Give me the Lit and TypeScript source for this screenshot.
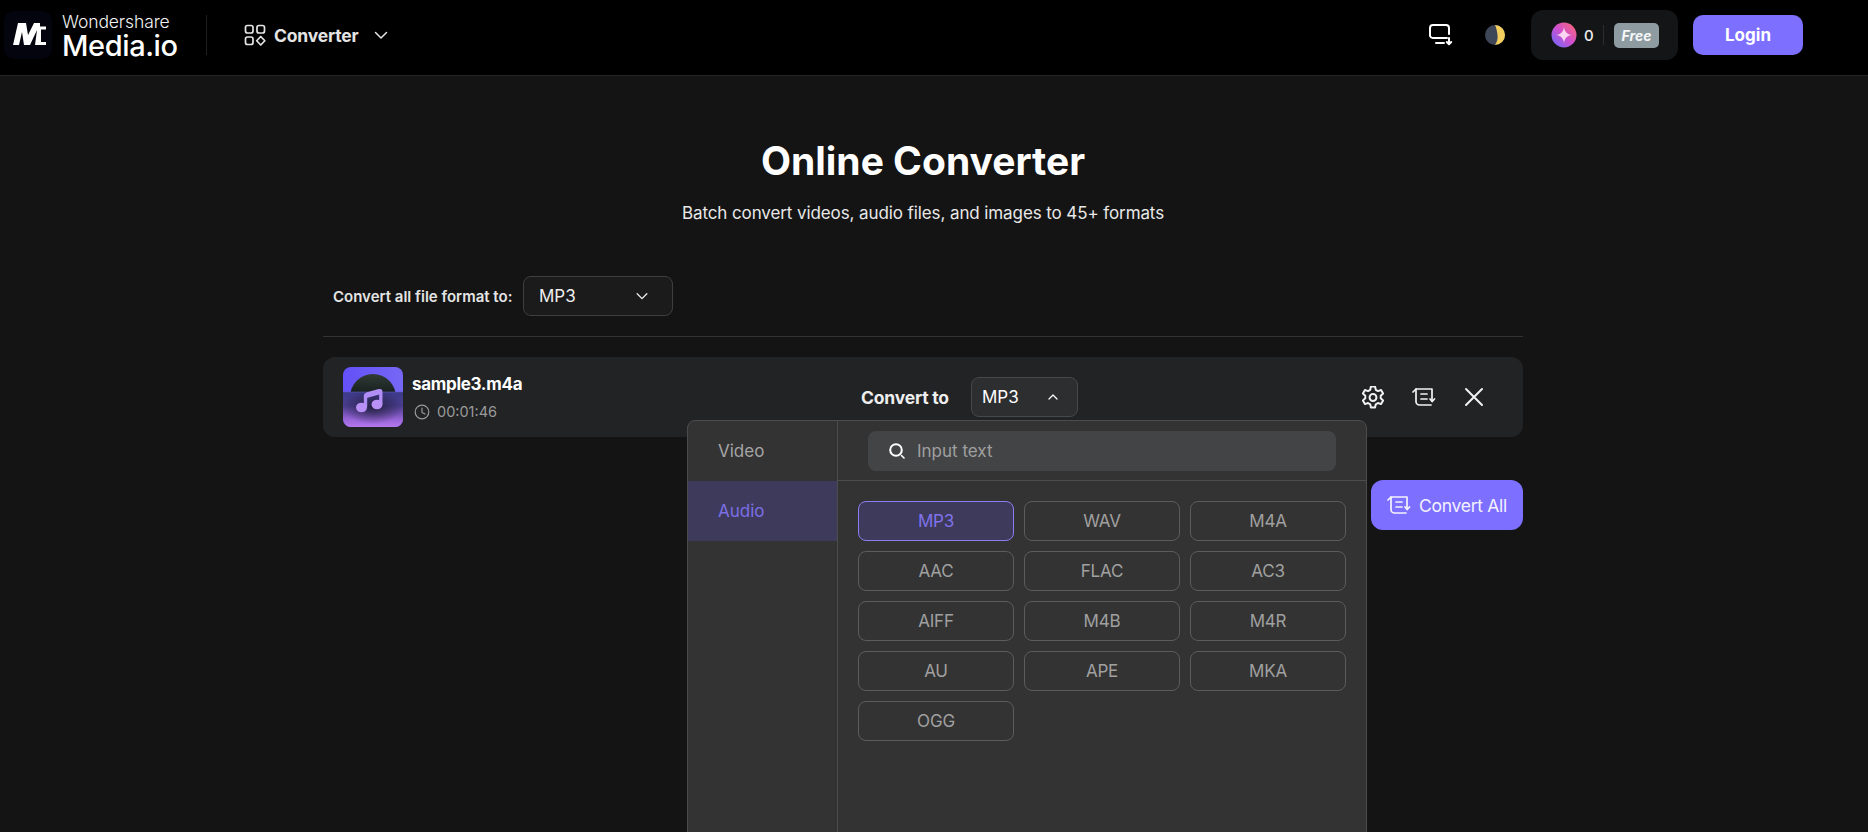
import { LitElement, html, css } from "lit";
import { customElement } from "lit/decorators.js";

const FORMATS = ["MP3","WAV","M4A","AAC","FLAC","AC3","AIFF","M4B","M4R","AU","APE","MKA","OGG"];

const chevronDown = (s = 16) => html`<svg width=${s} height=${s} viewBox="0 0 16 16" fill="none" stroke="currentColor" stroke-width="1.5" stroke-linecap="round" stroke-linejoin="round"><path d="M2.5 5.5 8 11l5.5-5.5"/></svg>`;
const chevronUp = html`<svg width="12" height="12" viewBox="0 0 12 12" fill="none" stroke="currentColor" stroke-width="1.2" stroke-linecap="round" stroke-linejoin="round"><path d="M2 8l4-4 4 4"/></svg>`;
const convertIcon = (s = 24) => html`<svg width=${s} height=${s} viewBox="0 0 24 24" fill="none" stroke="currentColor" stroke-width="1.7" stroke-linecap="round" stroke-linejoin="round"><path d="M1 7l3-3v12.500a3.500 3.500 0 0 0 3.500 3.500H19"/><path d="M4 4h16v12"/><path d="M9 9h6M9 14h6"/><path d="M18 14l2.200 2.500 2.300-2.500"/></svg>`;

@customElement("app-root")
export class AppRoot extends LitElement {
  static styles = css`
    :host { display: block; height: 832px; overflow: hidden; background: #141414; color: #fff; font-family: Inter, "Noto Sans", sans-serif; }
    * { box-sizing: border-box; }
    header { height: 76px; background: #000; border-bottom: 1px solid #262626; display: flex; align-items: center; padding: 0 65px 5px 4px; }
    .mark { width: 48px; height: 48px; border-radius: 10px; background: #04040f; display: flex; align-items: center; justify-content: center; }
    .mark svg { display: block; }
    .brand { margin-left: 10px; display: flex; flex-direction: column; line-height: 1; width: 121px; }
    .brand .top { font-size: 17.5px; font-weight: 300; line-height: 21px; color: #f2f2f2; letter-spacing: -0.1px; }
    .brand .bottom { font-size: 29px; font-weight: 500; line-height: 28px; letter-spacing: -0.4px; }
    .vr { width: 1px; height: 40px; background: #1f1f1f; margin-left: 23px; }
    .tool { margin-left: 37px; display: flex; align-items: center; color: #e4e4e4; }
    .tool .name { margin-left: 8px; font-size: 17.5px; font-weight: 700; width: 99px; letter-spacing: -0.2px; }
    .spacer { flex: 1; }
    .dl { display: flex; margin-right: 32px; margin-left: 1px; }
    .moon { display: flex; margin-right: 26px; }
    .pill { width: 147px; height: 50px; border-radius: 12px; background: #141516; display: flex; align-items: center; padding-left: 20px; margin-right: 15px; }
    .pill .num { margin-left: 7px; font-size: 15px; font-weight: 500; color: #eee; width: 19px; }
    .pill .sep { width: 1px; height: 20px; background: #2c2c2c; }
    .free { margin-left: 10px; width: 45px; height: 25px; border-radius: 5px; background: #8e9ba1; font-size: 14px; font-style: italic; font-weight: 700; display: flex; align-items: center; justify-content: center; color: #f4f6f7; }
    .login { width: 110px; height: 40px; border-radius: 10px; background: #7d6fff; border: 0; color: #fff; font: 700 17px Inter, sans-serif; }

    .wrap { padding-right: 22px; display: flex; justify-content: center; }
    main { width: 1200px; position: relative; }
    h1 { margin: 60px 0 0; height: 50px; line-height: 50px; font-size: 39px; font-weight: 700; text-align: center; }
    .sub { margin-top: 14px; height: 26px; line-height: 26px; font-size: 17px; text-align: center; color: #e8e8e8; letter-spacing: -0.1px; }
    .all { margin-top: 50px; height: 40px; display: flex; align-items: center; padding-left: 10px; }
    .all .lbl { font-size: 15px; font-weight: 600; color: #e4e4e4; width: 190px; }
    .sel { display: flex; align-items: center; border: 1px solid #3f3f3f; border-radius: 8px; color: #eee; font-size: 17px; }
    .sel.big { width: 150px; height: 40px; padding: 0 23px 0 15px; justify-content: space-between; background: #1b1b1b; }
    hr { margin: 20px 0 0; border: 0; height: 1px; background: #333; }
    .row { margin-top: 20px; height: 80px; border-radius: 12px; background: #222325; display: flex; align-items: center; padding: 0 20px; position: relative; }
    .thumb { width: 60px; height: 60px; flex: none; }
    .info { margin-left: 9px; width: 449px; display: flex; flex-direction: column; gap: 9px; }
    .fname { font-size: 17px; font-weight: 700; line-height: 20px; letter-spacing: -0.3px; }
    .dur { display: flex; align-items: center; gap: 7px; margin-left: 2px; font-size: 14.5px; line-height: 18px; color: #9a9a9a; }
    .to { font-size: 17.5px; font-weight: 700; color: #eee; width: 110px; letter-spacing: -0.2px; }
    .sel.small { width: 107px; height: 40px; padding: 0 18px 0 10px; justify-content: space-between; background: #2d2e30; border-color: #47484a; color: #fff; }
    .acts { margin-left: auto; display: flex; align-items: center; gap: 28px; margin-right: 19px; color: #f2f2f2; }
    .acts svg { display: block; }

    .bottom-act { margin-top: 43px; display: flex; justify-content: flex-end; }
    .go { width: 152px; height: 50px; border-radius: 12px; background: #7d6fff; border: 0; color: #f4f2ff; display: flex; align-items: center; justify-content: center; gap: 8px; font: 400 17.5px Inter, sans-serif; letter-spacing: -0.3px; }

    .panel { position: absolute; left: 364px; top: 344px; width: 680px; height: 460px; background: #333; border: 1px solid #4c4c4c; border-radius: 8px 8px 0 0; display: grid; grid-template-columns: 150px 1fr; align-content: start; }
    .side { border-right: 1px solid #4c4c4c; height: 460px; }
    .tab { height: 60px; display: flex; align-items: center; padding-left: 30px; font-size: 17px; color: #a5a5a5; }
    .tab.on { background: #3e3a5c; color: #7c6fe6; }
    .search-box { height: 60px; padding: 10px 30px 0; border-bottom: 1px solid #4c4c4c; }
    .search { height: 40px; border-radius: 8px; background: #434446; display: flex; align-items: center; padding-left: 20px; gap: 11px; color: #a0a0a0; font-size: 17px; }
    .chips { padding: 20px; display: grid; grid-template-columns: repeat(3, 1fr); gap: 10px; }
    .chip { height: 40px; border: 1px solid #5c5c5c; border-radius: 8px; display: flex; align-items: center; justify-content: center; font-size: 17px; color: #a0a0a0; letter-spacing: -0.2px; }
    .chip.on { background: #3e3a5c; border-color: #8a7ef0; color: #7f72ea; }
  `;

  render() {
    return html`
      <header>
        <div class="mark">
          <svg width="48" height="48" viewBox="0 -1 48 48" fill="#fff">
            <path d="M9 33 14 11h8l2 12 6-12h6v3.500h6v3h-5V30h5v3H31l2-15-7 15h-6l-2-13-3 13z"/>
          </svg>
        </div>
        <div class="brand"><span class="top">Wondershare</span><span class="bottom">Media.io</span></div>
        <div class="vr"></div>
        <div class="tool">
          <svg width="22" height="22" viewBox="0 0 22 22" fill="none" stroke="currentColor" stroke-width="1.700">
            <rect x="1.500" y="1.500" width="7.500" height="7.500" rx="2"/>
            <rect x="13" y="1.500" width="7.500" height="7.500" rx="2"/>
            <rect x="1.500" y="13" width="7.500" height="7.500" rx="2"/>
            <path d="M16.750 12.500 20.800 16.750 16.750 21 12.700 16.750z" stroke-linejoin="round"/>
          </svg>
          <span class="name">Converter</span>
          ${chevronDown(16)}
        </div>
        <div class="spacer"></div>
        <div class="dl">
          <svg width="24" height="22" viewBox="0 0 24 22" fill="none" stroke="#fff" stroke-width="2" stroke-linecap="round" stroke-linejoin="round">
            <path d="M18 14H4a3 3 0 0 1-3-2V4a3 3 0 0 1 3-3h13a3 3 0 0 1 3 3v6"/>
            <path d="M7 19h8"/><path d="M20 14v6M17.800 18l2.200 2.200 2.200-2.200"/>
          </svg>
        </div>
        <div class="moon">
          <svg width="20" height="20" viewBox="0 0 20 20">
            <circle cx="10" cy="10" r="10" fill="#3d4757"/>
            <path d="M10 0a10 10 0 0 1 0 20c2-3 3-6 2.500-10S11.500 3 10 0z" fill="#f4cf5e"/>
          </svg>
        </div>
        <div class="pill">
          <svg width="26" height="26" viewBox="0 0 26 26">
            <defs>
              <linearGradient id="cg2" x1="0" y1="1" x2="1" y2="0"><stop offset="0" stop-color="#5f6cff"/><stop offset=".5" stop-color="#d04fd0"/><stop offset="1" stop-color="#ff6a6a"/></linearGradient>
            </defs>
            <circle cx="13" cy="13" r="12.500" fill="url(#cg2)"/>
            <path d="M13 5c.7 5 3 7.300 8 8-5 .7-7.300 3-8 8-.7-5-3-7.300-8-8 5-.7 7.300-3 8-8z" fill="#fbd5f0"/>
          </svg>
          <span class="num">0</span>
          <span class="sep"></span>
          <span class="free">Free</span>
        </div>
        <button class="login">Login</button>
      </header>
      <div class="wrap">
        <main>
          <h1>Online Converter</h1>
          <div class="sub">Batch convert videos, audio files, and images to 45+ formats</div>
          <div class="all">
            <span class="lbl">Convert all file format to:</span>
            <div class="sel big"><span>MP3</span>${chevronDown(14)}</div>
          </div>
          <hr />
          <div class="row">
            <svg class="thumb" viewBox="0 0 60 60">
              <defs>
                <linearGradient id="bg" x1="0" y1="0" x2="1" y2="0"><stop offset="0" stop-color="#6450f8"/><stop offset="1" stop-color="#7767f5"/></linearGradient>
                <linearGradient id="pk" x1="0" y1="0" x2="0" y2="1"><stop offset="0" stop-color="#3d3a8a"/><stop offset=".4" stop-color="#4b3d8f"/><stop offset=".8" stop-color="#9a66da"/><stop offset="1" stop-color="#b578ee"/></linearGradient>
                <radialGradient id="glow" cx=".5" cy=".42" r=".5"><stop offset="0" stop-color="#1d1b33" stop-opacity=".85"/><stop offset="1" stop-color="#1d1b33" stop-opacity="0"/></radialGradient>
                <linearGradient id="vn" x1="0" y1="0" x2="0" y2="1"><stop offset="0" stop-color="#2f3b34"/><stop offset=".5" stop-color="#141a1c"/></linearGradient>
                <clipPath id="rr"><rect width="60" height="60" rx="8"/></clipPath>
              </defs>
              <g clip-path="url(#rr)">
                <rect width="60" height="60" fill="url(#bg)"/>
                <circle cx="30" cy="30" r="23" fill="url(#vn)"/>
                <path d="M0 25h60v35H0z" fill="url(#pk)"/>
                <path d="M0 25h60v35H0z" fill="url(#glow)"/>
                <path d="M0 25h60" stroke="#5f5ab0" stroke-width=".6"/>
                <g fill="none" stroke="#b18df6" stroke-width="3.400" stroke-linejoin="round"><path d="M22.500 40V29.500q0-2 2-2.600l11.500-3.200q1.800-.5 1.800 1.200V37"/></g>
                <path d="M22 27.500 38 23v4l-16 4.500z" fill="#b18df6"/>
                <ellipse cx="18.500" cy="40.500" rx="5.500" ry="4.800" fill="#b990f5"/>
                <ellipse cx="34" cy="37.500" rx="5.500" ry="4.800" fill="#b990f5"/>
              </g>
            </svg>
            <div class="info">
              <div class="fname">sample3.m4a</div>
              <div class="dur">
                <svg width="16" height="16" viewBox="0 0 16 16" fill="none" stroke="#9a9a9a" stroke-width="1.200" stroke-linecap="round" stroke-linejoin="round"><circle cx="8" cy="8" r="6.800"/><path d="M8 4v4.500l3 1.500"/></svg>
                <span>00:01:46</span>
              </div>
            </div>
            <span class="to">Convert to</span>
            <div class="sel small"><span>MP3</span>${chevronUp}</div>
            <div class="acts">
              <svg width="22" height="23" viewBox="2.500 2 19 20" fill="none" stroke="currentColor" stroke-width="1.700" stroke-linecap="round" stroke-linejoin="round">
                <circle cx="12" cy="12" r="3"/>
                <path d="M10.200 2.500h3.600l.6 2.800 1.900 1.100 2.700-.9 1.800 3.100-2.100 1.900v2.200l2.100 1.900-1.800 3.100-2.700-.9-1.900 1.100-.6 2.800h-3.600l-.6-2.800-1.900-1.100-2.700.9-1.800-3.100 2.100-1.900v-2.200L3.200 8.600 5 5.500l2.700.9 1.900-1.100z"/>
              </svg>
              ${convertIcon(24)}
              <svg width="20" height="20" viewBox="0 0 20 20" fill="none" stroke="currentColor" stroke-width="2" stroke-linecap="round"><path d="M2 2l16 16M18 2 2 18"/></svg>
            </div>
          </div>
          <div class="bottom-act">
            <button class="go">${convertIcon(24)}<span>Convert All</span></button>
          </div>

          <div class="panel">
            <div class="side">
              <div class="tab">Video</div>
              <div class="tab on">Audio</div>
            </div>
            <div>
              <div class="search-box">
                <div class="search">
                  <svg width="18" height="18" viewBox="0 0 18 18" fill="none" stroke="#fff" stroke-linecap="round"><circle cx="8" cy="8" r="5.800" stroke-width="2"/><path d="M13.500 13.500 16 16" stroke-width="1.600"/></svg>
                  <span>Input text</span>
                </div>
              </div>
              <div class="chips">
                ${FORMATS.map((f) => html`<div class="chip ${f === "MP3" ? "on" : ""}">${f}</div>`)}
              </div>
            </div>
          </div>
        </main>
      </div>
    `;
  }
}
